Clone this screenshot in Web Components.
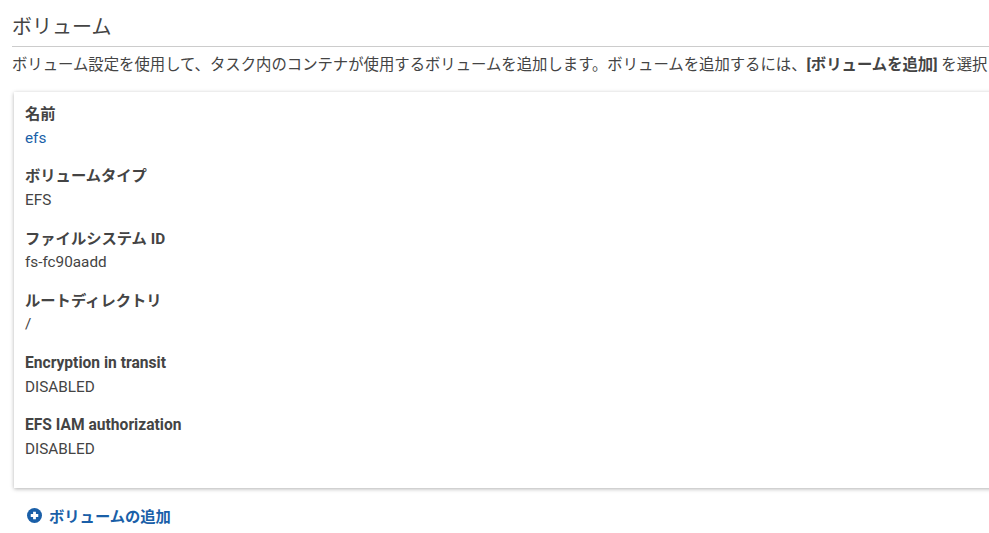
<!DOCTYPE html>
<html lang="ja">
<head>
<meta charset="utf-8">
<style>
html, body { margin: 0; height: 533px; overflow: hidden; background: #fff; }
body { font-family: Roboto, "Noto Sans CJK JP", sans-serif; font-size: 15.3px; color: #444; }
</style>
</head>
<body>
<volume-section heading="ボリューム">
	<span slot="desc">ボリューム設定を使用して、タスク内のコンテナが使用するボリュームを追加します。ボリュームを追加するには、<b>[ボリュームを追加]</b> を選択</span>
	<volume-field label="名前"><a>efs</a></volume-field>
	<volume-field label="ボリュームタイプ">EFS</volume-field>
	<volume-field label="ファイルシステム ID">fs-fc90aadd</volume-field>
	<volume-field label="ルートディレクトリ">/</volume-field>
	<volume-field latin label="Encryption in transit">DISABLED</volume-field>
	<volume-field latin label="EFS IAM authorization">DISABLED</volume-field>
	<add-link slot="after">ボリュームの追加</add-link>
</volume-section>
<script>
class VolumeSection extends HTMLElement {
	constructor() {
		super();
		var shadowRoot = this.attachShadow({mode: 'open'});
		shadowRoot.innerHTML = `
	<style>
	:host {
		display: block;
		padding: 13px 0 0 12px;
	}
	h2 {
		margin: 0;
		font-size: 20px;
		font-weight: 400;
		line-height: 28px;
		color: #444;
		border-bottom: 1px solid #ccc;
		padding-bottom: 5px;
	}
	p {
		margin: 0;
		padding-top: 8px;
		line-height: 20px;
		white-space: nowrap;
		font-size: 15.36px;
	}
	.card {
		margin: 17px -8px 0 2px;
		padding: 12px 11px 10.2px;
		background: #fff;
		box-shadow: 0 1px 4px rgba(0,0,0,.3);
	}
	</style>
	<h2></h2>
	<p><slot name="desc"></slot></p>
	<div class="card"><slot></slot></div>
	<slot name="after"></slot>
	`;
		shadowRoot.querySelector('h2').textContent = this.getAttribute('heading');
	}
}
customElements.define('volume-section', VolumeSection);

class VolumeField extends HTMLElement {
	constructor() {
		super();
		var shadowRoot = this.attachShadow({mode: 'open'});
		shadowRoot.innerHTML = `
	<style>
	:host {
		display: block;
		height: 62.3px;
	}
	:host([latin]) .label {
		font-size: 15.6px;
	}
	.label {
		font-weight: 700;
		line-height: 20px;
		padding-bottom: 3.5px;
	}
	.value {
		line-height: 20px;
	}
	::slotted(a) {
		color: #1a5fa8;
	}
	</style>
	<div class="label"></div>
	<div class="value"><slot></slot></div>
	`;
		shadowRoot.querySelector('.label').textContent = this.getAttribute('label');
	}
}
customElements.define('volume-field', VolumeField);

class AddLink extends HTMLElement {
	constructor() {
		super();
		var shadowRoot = this.attachShadow({mode: 'open'});
		shadowRoot.innerHTML = `
	<style>
	:host {
		display: flex;
		align-items: center;
		gap: 7px;
		margin: 17px 0 0 15px;
		height: 20px;
		font-weight: 700;
		color: #1a5fa8;
	}
	svg {
		width: 15px;
		height: 15px;
		position: relative;
		top: 1px;
	}
	</style>
	<svg viewBox="0 0 16 16"><circle cx="8" cy="8" r="8" fill="#1a5fa8"/><path d="M8 4v8M4 8h8" stroke="#fff" stroke-width="3"/></svg>
	<span><slot></slot></span>
	`;
	}
}
customElements.define('add-link', AddLink);
</script>
</body>
</html>
